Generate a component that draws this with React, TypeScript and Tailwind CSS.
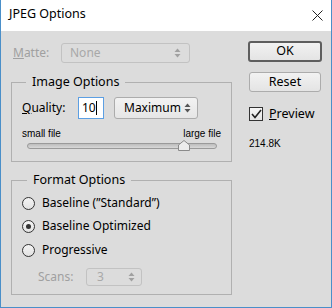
import React from "react";

const font = { fontFamily: '"Noto Sans", "Open Sans", sans-serif' };

function Arrows({ color = "#555" }: { color?: string }) {
  return (
    <svg width="7" height="10" viewBox="0 0 7 10">
      <path d="M3.5 0.5 L6.5 4 L0.5 4 Z" fill={color} />
      <path d="M0.5 6 L6.5 6 L3.5 9.5 Z" fill={color} />
    </svg>
  );
}

function Radio({ checked }: { checked?: boolean }) {
  return (
    <span className="w-[13px] h-[13px] rounded-full border border-[#333] bg-gradient-to-b from-[#f4f4f4] to-[#e2e2e2] flex items-center justify-center">
      {checked && <span className="w-[5px] h-[5px] rounded-full bg-[#333]" />}
    </span>
  );
}

export default function App() {
  return (
    <div
      className="w-[332px] h-[308px] border-x border-b border-[#4a8fc9] flex flex-col text-[12px] text-black"
      style={font}
    >
      <div className="h-[31px] bg-white flex items-center justify-between pl-[8px] pr-[8px]">
        <span className="text-[12.5px] leading-none pb-[2px]">JPEG Options</span>
        <svg width="11" height="11" viewBox="0 0 11 11">
          <path d="M0.5 0.5 L10.5 10.5 M10.5 0.5 L0.5 10.5" stroke="#222" strokeWidth="1" />
        </svg>
      </div>

      <div className="flex-1 bg-[#dcdcdc] flex">
        <div className="w-[221px] ml-[10px] pt-[12px] flex flex-col">
          <div className="h-[20px] flex items-center">
            <span className="w-[50px] pl-[2px] text-[#a0a0a0]">
              <span className="underline">M</span>atte:
            </span>
            <div className="w-[129px] h-[20px] rounded-[3px] border border-[#c2c2c2] flex items-center justify-between pl-[8px] pr-[8px] text-[#a8a8a8]">
              <span>None</span>
              <Arrows color="#a0a0a0" />
            </div>
          </div>

          <fieldset className="mt-[10px] border border-[#b0b0b0] pb-[10px]">
            <legend className="ml-[14px] px-[6px] leading-[18px] text-[12.5px]">Image Options</legend>
            <div className="mt-[6px] h-[22px] flex items-center pl-[10px]">
              <span className="w-[56px]">
                <span className="underline">Q</span>uality:
              </span>
              <div className="w-[26px] h-[22px] bg-white border border-[#5c9fe3] flex items-center pl-[3px]">
                <span>10</span>
                <span className="w-px h-[14px] bg-black" />
              </div>
              <div className="ml-[10px] w-[84px] h-[22px] rounded-[3px] border border-[#acacac] bg-gradient-to-b from-[#f2f2f2] to-[#e6e6e6] flex items-center justify-between pl-[9px] pr-[6px]">
                <span>Maximum</span>
                <Arrows />
              </div>
            </div>
            <div
              className="mt-[9px] h-[12px] flex items-center justify-between px-[10px] text-[10px] leading-[12px]"
              style={{ fontFamily: '"Liberation Sans", Arial, sans-serif' }}
            >
              <span>small file</span>
              <span>large file</span>
            </div>
            <div className="relative h-[11px] ml-[15px] mr-[14px] flex items-center">
              <div className="w-full h-[6px] rounded-[3px] border border-[#9a9a9a] bg-gradient-to-b from-[#bdbdbd] to-[#d8d8d8]" />
              <svg width="12" height="11" viewBox="0 0 12 11" className="absolute left-[151px] top-0">
                <path d="M0.5 10.5 L0.5 5 L6 0.5 L11.5 5 L11.5 10.5 Z" fill="#ececec" stroke="#8a8a8a" />
              </svg>
            </div>
          </fieldset>

          <fieldset className="mt-[9px] border border-[#b0b0b0] pb-[8px]">
            <legend className="ml-[15px] px-[6px] leading-[18px] text-[12.5px]">Format Options</legend>
            <div className="mt-[4px] h-[20px] flex items-center pl-[10px] gap-[7px]">
              <Radio />
              <span>Baseline (”Standard”)</span>
            </div>
            <div className="mt-[3px] h-[20px] flex items-center pl-[10px] gap-[7px]">
              <Radio checked />
              <span>Baseline Optimized</span>
            </div>
            <div className="mt-[4px] h-[20px] flex items-center pl-[10px] gap-[7px]">
              <Radio />
              <span>Progressive</span>
            </div>
            <div className="mt-[8px] h-[18px] flex items-center pl-[26px]">
              <span className="w-[48px] text-[#a0a0a0]">Scans:</span>
              <div className="w-[56px] h-[18px] rounded-[3px] border border-[#c2c2c2] flex items-center justify-between pl-[10px] pr-[6px] text-[#a8a8a8]">
                <span>3</span>
                <Arrows color="#a0a0a0" />
              </div>
            </div>
          </fieldset>
        </div>

        <div className="ml-[16px] pt-[10px] flex flex-col">
          <button className="w-[74px] h-[21px] rounded-[3px] border-2 border-[#5e5e5e] bg-gradient-to-b from-[#f2f2f2] to-[#e4e4e4] text-[12.5px] leading-none">
            OK
          </button>
          <button className="mt-[10px] ml-px w-[72px] h-[20px] rounded-[3px] border border-[#acacac] bg-gradient-to-b from-[#f2f2f2] to-[#e4e4e4] text-[12.5px] leading-none">
            Reset
          </button>
          <div className="mt-[15px] ml-px h-[14px] flex items-center gap-[6px]">
            <span className="w-[14px] h-[14px] border border-[#333] bg-gradient-to-b from-[#f6f6f6] to-[#e4e4e4] flex items-center justify-center">
              <svg width="11" height="10" viewBox="0 0 11 10">
                <path d="M1 5 L4 8.5 L10 1" fill="none" stroke="#222" strokeWidth="1.6" />
              </svg>
            </span>
            <span className="text-[12.5px]">
              <span className="underline">P</span>review
            </span>
          </div>
          <span
            className="mt-[17px] ml-px text-[10px] leading-[12px]"
            style={{ fontFamily: '"Liberation Sans", Arial, sans-serif' }}
          >
            214.8K
          </span>
        </div>
      </div>
    </div>
  );
}
